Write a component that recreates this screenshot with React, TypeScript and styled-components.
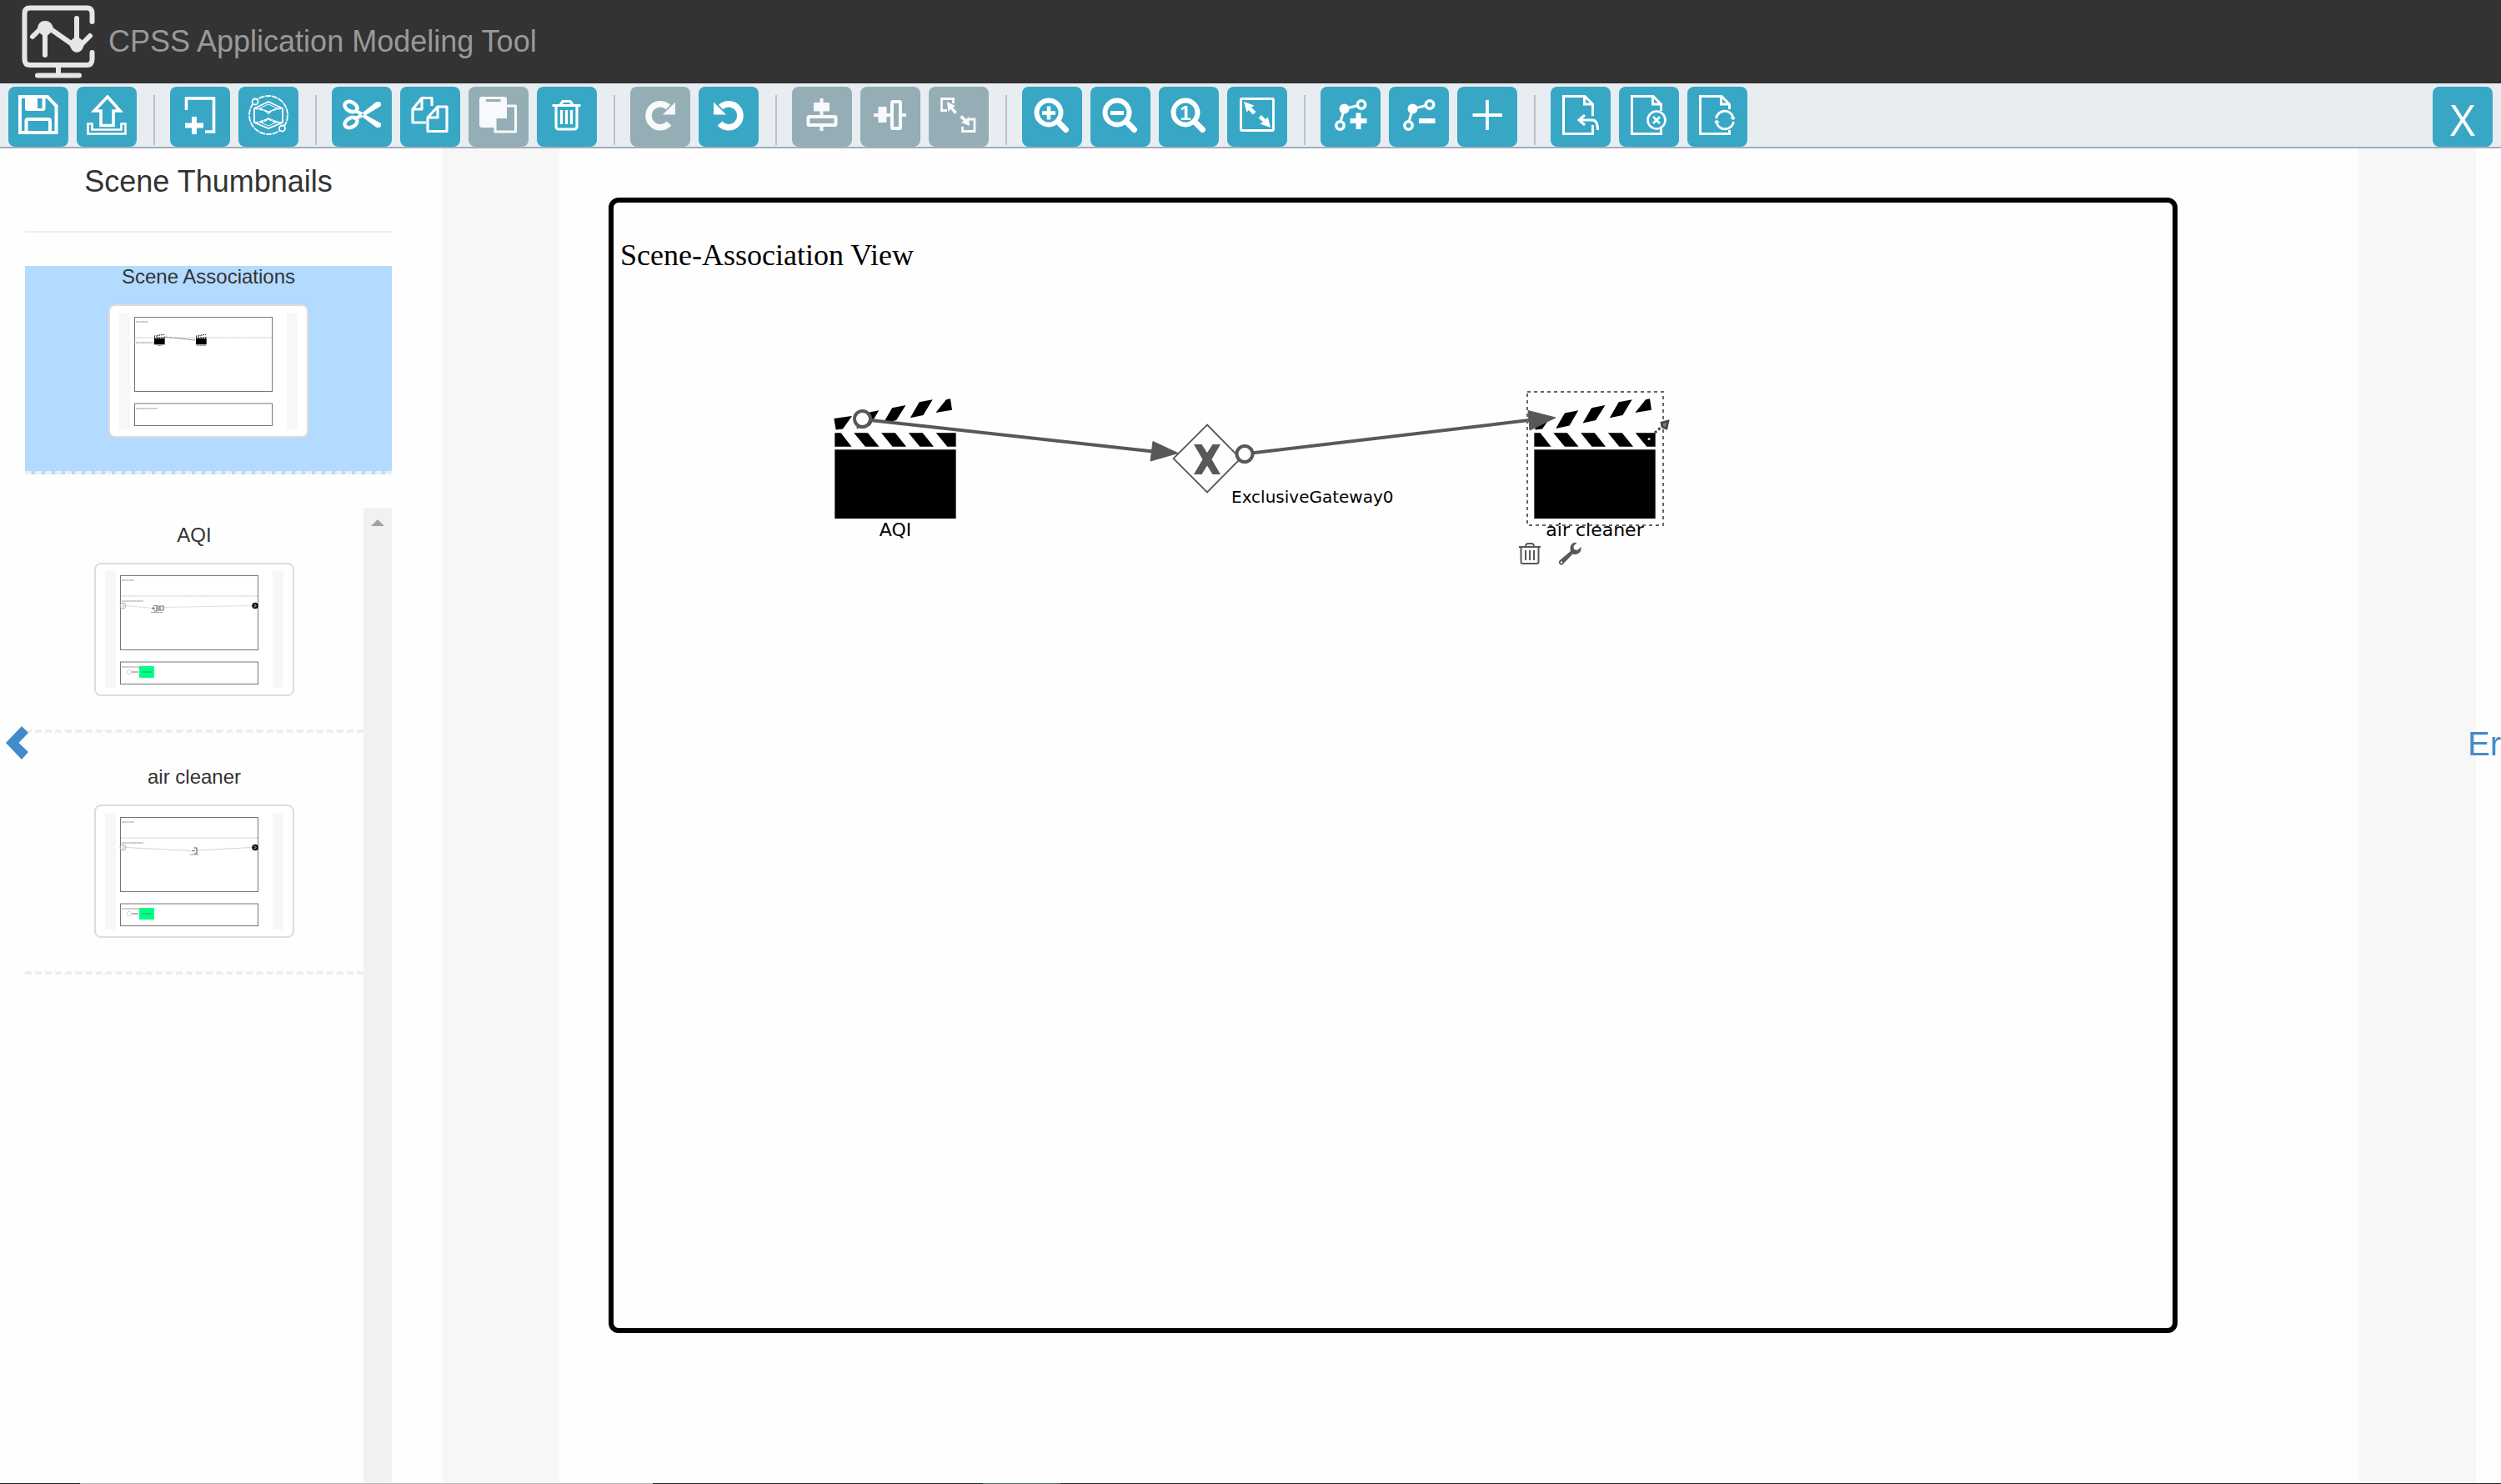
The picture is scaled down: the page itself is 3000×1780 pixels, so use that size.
import React from "react";
import styled, { createGlobalStyle } from "styled-components";

const GlobalStyle = createGlobalStyle`
  *, *::before, *::after { box-sizing: border-box; }
  body {
    margin: 0;
    background: #fefefe;
    color: #333;
    font-family: Arial, "Liberation Sans", sans-serif;
  }
  button { font: inherit; margin: 0; border: 0; padding: 0; background: none; cursor: pointer; }
`;

const Page = styled.div`
  position: relative;
  display: flex;
  flex-direction: column;
  height: 100vh;
  overflow: hidden;
`;

const Header = styled.header`
  display: flex;
  align-items: center;
  gap: 14px;
  height: 100px;
  flex: none;
  padding-left: 24px;
  background: #333;
  color: #999;
`;

const AppTitle = styled.h1`
  margin: 0;
  font-size: 36px;
  line-height: 40px;
  font-weight: 400;
`;

const Toolbar = styled.div`
  display: flex;
  align-items: flex-start;
  gap: 10px;
  flex: none;
  padding: 4px 10px 0;
  background: #e8edf1;
  border-bottom: 2px solid #a3acbd;
`;

const ToolButton = styled.button<{ $muted?: boolean }>`
  display: flex;
  justify-content: center;
  width: 72px;
  height: 72px;
  padding-top: 10px;
  border-radius: 8px;
  background: ${(p) => (p.$muted ? "#95aeb5" : "#38a7c6")};
  color: ${(p) => (p.$muted ? "#f7f9fb" : "#fff")};
`;

const CloseButton = styled(ToolButton)`
  margin-left: auto;
  padding: 0;
  font-family: "Open Sans", "Noto Sans", sans-serif;
  font-size: 52px;
  font-weight: 500;
  line-height: 78px;
`;

const Divider = styled.span`
  width: 2px;
  height: 60px;
  margin: 10px 8px 0 10px;
  background: #bac1cb;
`;

const Main = styled.main`
  display: flex;
  flex: 1;
  min-height: 0;
`;

const Sidebar = styled.aside`
  display: flex;
  flex-direction: column;
  flex: none;
  width: 530px;
  padding: 0 60px 0 30px;
`;

const SidebarTitle = styled.h2`
  margin: 0;
  padding: 20px 0 39px;
  border-bottom: 2px solid #eee;
  font-size: 36px;
  line-height: 40px;
  font-weight: 400;
  text-align: center;
`;

const SceneCard = styled.button<{ $selected?: boolean }>`
  display: flex;
  flex-direction: column;
  align-items: center;
  gap: 20px;
  flex: none;
  width: 100%;
  height: 250px;
  margin: ${(p) => (p.$selected ? "40px 0" : "20px 0")};
  border-bottom: 4px dashed #eee;
  background: ${(p) => (p.$selected ? "#b3daff" : "transparent")};
  color: #333;
  font-size: 24px;
  line-height: 26px;
`;

const ThumbFrame = styled.span`
  display: block;
  width: 240px;
  height: 160px;
  padding: 8px;
  border: 2px solid #ddd;
  border-radius: 8px;
  background: #fff;
`;

const SceneScroller = styled.div`
  display: flex;
  flex: 1;
  min-height: 0;
`;

const SceneList = styled.div`
  flex: 1;
  overflow: hidden;
  display: flex;
  flex-direction: column;
`;

const ScrollTrack = styled.div`
  display: flex;
  justify-content: center;
  width: 34px;
  padding-top: 14px;
  background: #f1f1f1;
`;

const Workspace = styled.section`
  display: flex;
  flex: 1;
  padding: 0 141px;
  background: #f7f7f7;
`;

const Sheet = styled.div`
  display: flex;
  flex: 1;
  padding: 59px 217px 180px 59px;
  background: #fefefe;
`;

const SceneBox = styled.div`
  position: relative;
  flex: 1;
  border: 6px solid #000;
  border-radius: 12px;
`;

const SceneTitle = styled.h3`
  margin: 41px 0 0 8px;
  color: #000;
  font: 400 36px/44px "Times New Roman", "Liberation Serif", serif;
`;

/* Free canvas on which the nodes of the diagram are placed. */
const DiagramLayer = styled.div`
  position: absolute;
  inset: -6px;
  color: #000;
  font-family: Verdana, "DejaVu Sans", sans-serif;
`;

const Edges = styled.svg`
  position: absolute;
  inset: 0;
  width: 100%;
  height: 100%;
  overflow: visible;
`;

const DiagramNode = styled.div<{ $x: number; $y: number }>`
  position: absolute;
  left: ${(p) => p.$x}px;
  top: ${(p) => p.$y}px;
  display: flex;
  flex-direction: column;
  align-items: center;
  font-size: 22px;
  line-height: 28px;
  white-space: nowrap;
`;

const GatewayLabel = styled.span`
  position: absolute;
  left: 71px;
  top: 76px;
  font-size: 20px;
  line-height: 24px;
`;

const NodeActions = styled.div`
  position: absolute;
  left: 1091px;
  top: 413px;
  display: flex;
  gap: 20px;
`;

const NodeAction = styled.button`
  display: flex;
  width: 28px;
  height: 28px;
  color: #585858;
`;

const RightGutter = styled.div`
  flex: none;
  width: 30px;
`;

const SideLink = styled.a<{ $side: "left" | "right" }>`
  position: absolute;
  top: 50%;
  ${(p) => (p.$side === "left" ? "left: 0;" : "right: 0;")}
  width: 40px;
  height: 48px;
  margin-top: -22px;
  overflow: hidden;
  color: #428bca;
  font-size: 40px;
  line-height: 48px;
  text-decoration: none;
  white-space: nowrap;
`;

const WindowEdge = styled.div`
  flex: none;
  height: 1px;
  background: linear-gradient(
    to right,
    #222 0 3.2%,
    #bbb 3.2% 26.1%,
    #222a2e 26.1% 39.3%,
    #566 39.3% 42.4%,
    #222a2e 42.4% 100%
  );
`;

/* ---------- icons, drawn on a 48 x 48 grid ---------- */

const icons: Record<string, React.ReactNode> = {
  save: (
    <>
      <path d="M2 2H35L45.5 13V45H2Z" strokeWidth="4" />
      <path d="M8 2h24.500v14a3 3 0 0 1-3 3H11a3 3 0 0 1-3-3ZM23 4v12h5.500V4Z" fill="currentColor" fillRule="evenodd" stroke="none" />
      <path d="M9.500 45V31a2 2 0 0 1 2-2H36a2 2 0 0 1 2 2V45" strokeWidth="4" />
    </>
  ),
  upload: (
    <>
      <path d="M25 2L40 19H32V36.500H17V19H9Z" strokeWidth="3.600" />
      <path d="M1.500 34.500H6.500V41.500H41.500V34.500H46.500V46.500H1.500Z" strokeWidth="2.600" />
    </>
  ),
  frame: (
    <>
      <path d="M7.500 18V4H40.500V44H30" strokeWidth="3.600" />
      <path d="M17 26V47M6 36.500H28" strokeWidth="6" />
    </>
  ),
  globe: (
    <g strokeWidth="1.800">
      <circle cx="24" cy="24" r="23" strokeDasharray="7 1" />
      <path d="M24 8L41 16V33L24 40L7 33V16Z" />
      <path d="M7 16Q20 17 24 22Q28 17 41 16M7 33Q20 33 24 28Q28 33 41 33" strokeDasharray="5 1" />
      <path d="M24 11L35 16L24 20L13 16ZM24 37L35 32L24 28L13 32Z" strokeWidth="1" />
      <circle cx="8" cy="8" r="3.500" fill="#38a7c6" />
      <circle cx="40.500" cy="40" r="3.500" fill="#38a7c6" />
    </g>
  ),
  cut: (
    <>
      <ellipse cx="11" cy="14" rx="8" ry="5.500" transform="rotate(28 11 14)" strokeWidth="4.500" />
      <ellipse cx="11" cy="33" rx="8" ry="5.500" transform="rotate(-28 11 33)" strokeWidth="4.500" />
      <path d="M17 17L25 21L41 8.500Q45 7 47 9.500V13L29 24L47 34V37.500Q45 40 41 38.500L25 26.500L17 30L16 26L21 23.500L16 21Z" fill="currentColor" stroke="none" />
      <circle cx="25" cy="23.500" r="1.200" fill="#38a7c6" stroke="none" />
    </>
  ),
  copy: (
    <g strokeWidth="3.200" strokeLinejoin="round">
      <path d="M19 33H3V17L14 3.500H26V13M14 4V17H3" />
      <path d="M33 14H44V43.500H21V27ZM33 14V27H21" />
    </g>
  ),
  paste: (
    <>
      <path d="M4 2H31a3 3 0 0 1 3 3V39H4a3 3 0 0 1-3-3V5a3 3 0 0 1 3-3Z" fill="currentColor" stroke="none" />
      <path d="M9 6.500H26.500" stroke="#95aeb5" strokeWidth="3" />
      <path d="M32 13H44.500V44H20V27Z" fill="#95aeb5" strokeWidth="3" strokeLinejoin="round" />
      <path d="M33 14V27H21L33 14Z" fill="currentColor" strokeWidth="2" />
    </>
  ),
  trash: (
    <g strokeWidth="3.200">
      <path d="M6.500 12.500H40.500M16 12L19 7.500H28L31 12" />
      <path d="M11 13V38a3 3 0 0 0 3 3H33a3 3 0 0 0 3-3V13M17.500 18V35M23.500 18V35M29.500 18V35" />
    </g>
  ),
  redo: (
    <>
      <path d="M33.500 14.500A14 14 0 1 0 34.500 34" strokeWidth="7.500" />
      <path d="M42 8.500V23.500H27Z" fill="currentColor" stroke="none" />
    </>
  ),
  undo: (
    <>
      <path d="M14.500 14.500A14 14 0 1 1 13.500 34" strokeWidth="7.500" />
      <path d="M6 8.500V23.500H21Z" fill="currentColor" stroke="none" />
    </>
  ),
  alignCenter: (
    <>
      <path d="M23.500 4V24M23.500 38V43" strokeWidth="4" />
      <rect x="14" y="9" width="19" height="10.500" rx="1" fill="currentColor" stroke="none" />
      <rect x="7.500" y="26" width="33" height="10" rx="1" strokeWidth="4" />
    </>
  ),
  alignMiddle: (
    <>
      <path d="M4 24H24M38 24H43" strokeWidth="4" />
      <rect x="9.500" y="14" width="10" height="19" rx="1" fill="currentColor" stroke="none" />
      <rect x="26" y="8" width="10" height="32" rx="1" strokeWidth="4" />
    </>
  ),
  sameSize: (
    <>
      <path d="M10 18.500H3.500V4.500H17.500V10M36 29H43V43.500H28.500V38" strokeWidth="2.800" />
      <path d="M10 8L20 13L17 15L22 20L19 23L14.500 17L11.500 20Z" fill="currentColor" stroke="none" />
      <path d="M37 37L27 33L30 31L25 27L28 24L33 29L36 26Z" fill="currentColor" stroke="none" />
    </>
  ),
  zoomIn: (
    <>
      <circle cx="20" cy="21" r="14.500" strokeWidth="6" />
      <path d="M31 32L40.500 41.500" strokeWidth="7" strokeLinecap="round" />
      <path d="M12 21.500H28M20 13.500V29.500" strokeWidth="4.500" />
    </>
  ),
  zoomOut: (
    <>
      <circle cx="20" cy="21" r="14.500" strokeWidth="6" />
      <path d="M31 32L40.500 41.500" strokeWidth="7" strokeLinecap="round" />
      <path d="M12 21.500H28" strokeWidth="5" />
    </>
  ),
  zoomActual: (
    <>
      <circle cx="20" cy="21" r="14.500" strokeWidth="6" />
      <path d="M31 32L40.500 41.500" strokeWidth="7" strokeLinecap="round" />
      <text x="20" y="30" textAnchor="middle" fontSize="24" fontWeight="700" fontFamily="Arial, Liberation Sans, sans-serif" fill="currentColor" stroke="none">1</text>
    </>
  ),
  fit: (
    <>
      <rect x="4.500" y="4.500" width="39" height="38" rx="1" strokeWidth="2.800" />
      <path d="M8 8L20.500 12.500L17 15L22.500 20L19 23.500L14 18L11.500 20.500Z" fill="currentColor" stroke="none" />
      <path d="M40 39L27.500 34.500L31 32L25.500 27.500L29 24L34 29L37 26.500Z" fill="currentColor" stroke="none" />
    </>
  ),
  addBend: (
    <>
      <path d="M33 12.500L16.500 16.500L12 32" strokeWidth="3" />
      <circle cx="37" cy="11.500" r="4.700" strokeWidth="3.600" />
      <circle cx="16.500" cy="16.500" r="6" fill="currentColor" stroke="none" />
      <circle cx="11.500" cy="36.500" r="4.700" strokeWidth="3.600" />
      <path d="M33.500 21.500V41M23.500 31H43.500" strokeWidth="6" />
    </>
  ),
  removeBend: (
    <>
      <path d="M33 12.500L16.500 16.500L12 32" strokeWidth="3" />
      <circle cx="37" cy="11.500" r="4.700" strokeWidth="3.600" />
      <circle cx="16.500" cy="16.500" r="6" fill="currentColor" stroke="none" />
      <circle cx="11.500" cy="36.500" r="4.700" strokeWidth="3.600" />
      <path d="M24 31H43.500" strokeWidth="6" />
    </>
  ),
  plus: <path d="M24 6V42M6.500 24H42" strokeWidth="3.800" />,
  docBack: (
    <>
      <path d="M38.500 25V11L29 1.500H3.500V46.500H38.500V36M28.500 1.500V11H38" strokeWidth="3" />
      <path d="M29 24L22 30L29 36M22 30H38Q44.500 30 44.500 42" strokeWidth="3" />
    </>
  ),
  docDelete: (
    <>
      <path d="M38.500 19V11L29 1.500H3.500V46.500H38.500V40M28.500 1.500V11H38" strokeWidth="3" />
      <circle cx="33" cy="30" r="10.500" strokeWidth="2.600" />
      <path d="M29 26L37 34M37 26L29 34" strokeWidth="2.600" />
    </>
  ),
  docRefresh: (
    <>
      <path d="M38.500 17V11L29 1.500H3.500V46.500H38.500V42M28.500 1.500V11H38" strokeWidth="3" />
      <path d="M22.500 28A10.500 10.500 0 0 1 43 27M43.500 32A10.500 10.500 0 0 1 23 33" strokeWidth="2.800" />
      <path d="M39 27H46L43 30ZM20 33L23 29.500L27 33Z" fill="currentColor" stroke="none" />
    </>
  ),
};

const Icon = ({ name, size = 48 }: { name: string; size?: number }) => (
  <svg width={size} height={size} viewBox="0 0 48 48" fill="none" stroke="currentColor" aria-hidden="true">
    {icons[name]}
  </svg>
);

const Logo = () => (
  <svg width="92" height="92" viewBox="24 4 92 92" fill="none" stroke="#e6e6e6" strokeWidth="6" strokeLinecap="round" aria-hidden="true">
    <path d="M110.500 26V16Q110.500 9.500 104 9.500H36Q29.500 9.500 29.500 16V71Q29.500 78 36 78H104Q110.500 78 110.500 71V63" />
    <path d="M70 80V90M45 90.500H95" />
    <path d="M54 33V66M39 44L49 34M58 33L88 54M92 22V54M96 55L108 43" />
    <path d="M45 34Q46 25 54 25Q62 25 64 34Q61 41 54 44Q47 41 45 34ZM83 52Q86 46 92 44Q98 46 101 52Q100 62 92 63Q85 62 83 52Z" fill="#e6e6e6" stroke="none" />
  </svg>
);

/* ---------- clapperboard ---------- */

const ClapperShapes = () => (
  <g fill="#000">
    <path d="M-3 75L62 66L29 113L4 116ZM78 111L110 56L159 46L127 101ZM175 92L207 37L256 27L222 81ZM272 73L305 16L353 7L319 63ZM364 54L402 7L417 4L423 44Z" />
    <path d="M0 127H22L61 177H0ZM69 127H119L160 177H110ZM168 127H218L258 177H208ZM266 127H317L357 177H307ZM365 127H437V177H406ZM0 187H437V436H0Z" />
  </g>
);

const Clapper = () => (
  <svg width="146" height="145" viewBox="0 0 437 436" overflow="visible" aria-hidden="true">
    <ClapperShapes />
  </svg>
);

/* ---------- scene thumbnails ---------- */

type SceneKind = "associations" | "aqi" | "cleaner";

const ThumbPicture = ({ kind }: { kind: SceneKind }) => (
  <svg width="220" height="140" viewBox="0 0 220 140" fill="none" aria-hidden="true">
    <path d="M3 0H16V140H3ZM204 0H217V140H204Z" fill="#f7f7f7" />
    <rect x="21.500" y="5.500" width="165" height="89" stroke="#757575" />
    <rect x="21.500" y="109" width="165" height="26.500" stroke="#757575" />
    <path d="M22 109H186" stroke="#bbb" strokeWidth="2" />
    <path d="M22 30H186" stroke="#bbb" strokeWidth="0.800" strokeDasharray="2 0.700" />
    <path d="M23 11H38M23 36H49M23 115H49" stroke="#aaa" strokeWidth="1.600" strokeDasharray="1.300 0.500" />
    {kind === "associations" ? (
      <>
        <path d="M57 29L94 33" stroke="#888" strokeDasharray="5 0.600" />
        <g transform="translate(45 25.500) scale(0.029)"><ClapperShapes /></g>
        <g transform="translate(95 25.500) scale(0.029)"><ClapperShapes /></g>
        <path d="M49 39.500H54M96 39.500H107" stroke="#888" strokeDasharray="1.300 0.500" />
      </>
    ) : (
      <>
        <circle cx="24.500" cy="41.500" r="3.500" stroke="#aaa" />
        <path d="M24 39.500L26 41.500L24 43.500" stroke="#999" />
        {kind === "aqi" ? (
          <>
            <path d="M28 41.500L59 44.500M74 43.500L179 41.500" stroke="#ccc" strokeWidth="0.800" strokeDasharray="2.500 0.600" />
            <path d="M59 44.500H63M61 42.500V46.500M61.500 41.500H65V48H61.500M67 42H73V47H67ZM69 42V47" stroke="#777" strokeWidth="1.200" />
            <path d="M58 49.500H72" stroke="#888" strokeDasharray="1.300 0.500" />
          </>
        ) : (
          <>
            <path d="M28 41.500L106 45.500M113 45L179 41.500" stroke="#bbb" strokeWidth="0.800" strokeDasharray="2.500 0.600" />
            <path d="M107 45.500H111M109.500 42H113V49H109.500" stroke="#666" strokeWidth="1.200" />
            <path d="M105 50H115" stroke="#888" strokeDasharray="1.300 0.500" />
          </>
        )}
        <circle cx="183" cy="41.500" r="3.800" fill="#111" />
        <path d="M182 39.500L184 41.500L182 43.500" stroke="#fff" strokeWidth="0.900" />
        <circle cx="32" cy="121" r="2.700" stroke="#ccc" fill="#fff" strokeWidth="0.800" />
        <path d="M35 121H43" stroke="#777" />
        <rect x="44" y="114" width="18" height="14" rx="1" fill="#00ff85" />
        <path d="M47 121H59" stroke="#1a8a55" strokeDasharray="1.300 0.500" />
      </>
    )}
  </svg>
);

const Scene = ({ name, kind, selected }: { name: string; kind: SceneKind; selected?: boolean }) => (
  <SceneCard type="button" $selected={selected}>
    <span>{name}</span>
    <ThumbFrame>
      <ThumbPicture kind={kind} />
    </ThumbFrame>
  </SceneCard>
);

/* ---------- page ---------- */

type Tool = { icon: string; label: string; muted?: boolean };

const toolGroups: Tool[][] = [
  [
    { icon: "save", label: "Save" },
    { icon: "upload", label: "Upload" },
  ],
  [
    { icon: "frame", label: "New scene" },
    { icon: "globe", label: "Resources" },
  ],
  [
    { icon: "cut", label: "Cut" },
    { icon: "copy", label: "Copy" },
    { icon: "paste", label: "Paste", muted: true },
    { icon: "trash", label: "Delete" },
  ],
  [
    { icon: "redo", label: "Redo", muted: true },
    { icon: "undo", label: "Undo" },
  ],
  [
    { icon: "alignCenter", label: "Align vertical", muted: true },
    { icon: "alignMiddle", label: "Align horizontal", muted: true },
    { icon: "sameSize", label: "Same size", muted: true },
  ],
  [
    { icon: "zoomIn", label: "Zoom in" },
    { icon: "zoomOut", label: "Zoom out" },
    { icon: "zoomActual", label: "Zoom to actual size" },
    { icon: "fit", label: "Zoom to fit" },
  ],
  [
    { icon: "addBend", label: "Add bend point" },
    { icon: "removeBend", label: "Remove bend point" },
    { icon: "plus", label: "Add" },
  ],
  [
    { icon: "docBack", label: "Import document" },
    { icon: "docDelete", label: "Delete document" },
    { icon: "docRefresh", label: "Refresh document" },
  ],
];

const Diagram = () => (
  <DiagramLayer>
    <DiagramNode $x={271} $y={240}>
      <Clapper />
      AQI
    </DiagramNode>
    <DiagramNode $x={1110} $y={240}>
      <Clapper />
      air cleaner
    </DiagramNode>
    <DiagramNode $x={676} $y={271}>
      <svg width="84" height="84" viewBox="0 0 84 84" aria-hidden="true">
        <path d="M42 1.500L82 42L42 82.500L1.500 42Z" fill="#fefefe" stroke="#585858" strokeWidth="1.800" />
        <path d="M26 25H35.500L42 35L48.500 25H58L47.500 43L58 61H48.500L42 50.500L35.500 61H26L36.500 43Z" fill="#585858" />
      </svg>
      <GatewayLabel>ExclusiveGateway0</GatewayLabel>
    </DiagramNode>
    <Edges aria-hidden="true">
      <g stroke="#585858" strokeWidth="4" fill="#fefefe">
        <path d="M305 266L653 304.500M763 307.500L1104 267" />
        <circle cx="304.500" cy="265.500" r="9.500" />
        <circle cx="763" cy="307.500" r="9.500" />
      </g>
      <path d="M683 306.500L653 292.500L650 316ZM1136 264L1103 255.500L1105 279Z" fill="#585858" stroke="#585858" />
      <rect x="1102" y="233" width="163" height="160" fill="none" stroke="#666" strokeWidth="2" strokeDasharray="4 4" />
      <circle cx="1248" cy="289.500" r="1.500" fill="#ddd" />
      <path d="M1255 282L1264 274" stroke="#444" strokeWidth="3" strokeDasharray="3 2.500" />
      <path d="M1263 270L1271 268L1269 277L1264 275Z" fill="#777" stroke="#444" strokeWidth="2.600" />
    </Edges>
    <NodeActions>
      <NodeAction type="button" aria-label="Delete node">
        <svg width="28" height="28" viewBox="0 0 28 28" fill="none" stroke="currentColor" strokeWidth="2" aria-hidden="true">
          <path d="M1 6H27M9 6Q9 2 12 2H16Q19 2 19 6M3.500 6V24Q3.500 26 5.500 26H22.500Q24.500 26 24.500 24V6M9 10V22M14 10V22M19 10V22" />
        </svg>
      </NodeAction>
      <NodeAction type="button" aria-label="Edit node">
        <svg width="28" height="28" viewBox="0 0 28 28" aria-hidden="true">
          <path d="M22.500 1Q17 0 15 5Q14 8 15 11L1.500 22.500Q0 25 2 27Q4.500 28.500 6.500 26L17.500 14.500Q22 16 25.500 13Q28 10.500 27.500 6L23 10L19 9L18.500 5Z" fill="currentColor" />
          <circle cx="4" cy="24.500" r="1.200" fill="#fff" />
        </svg>
      </NodeAction>
    </NodeActions>
  </DiagramLayer>
);

export default function App() {
  return (
    <>
      <GlobalStyle />
      <Page>
        <Header>
          <Logo />
          <AppTitle>CPSS Application Modeling Tool</AppTitle>
        </Header>
        <Toolbar role="toolbar" aria-label="Editor tools">
          {toolGroups.map((group, i) => (
            <React.Fragment key={i}>
              {i > 0 && <Divider />}
              {group.map((tool) => (
                <ToolButton key={tool.icon} type="button" aria-label={tool.label} $muted={tool.muted}>
                  <Icon name={tool.icon} />
                </ToolButton>
              ))}
            </React.Fragment>
          ))}
          <CloseButton type="button" aria-label="Close editor">X</CloseButton>
        </Toolbar>
        <Main>
          <Sidebar>
            <SidebarTitle>Scene Thumbnails</SidebarTitle>
            <Scene name="Scene Associations" kind="associations" selected />
            <SceneScroller>
              <SceneList>
                <Scene name="AQI" kind="aqi" />
                <Scene name="air cleaner" kind="cleaner" />
              </SceneList>
              <ScrollTrack>
                <svg width="16" height="8" viewBox="0 0 16 8" aria-hidden="true">
                  <path d="M8 0L16 8H0Z" fill="#a3a3a3" />
                </svg>
              </ScrollTrack>
            </SceneScroller>
          </Sidebar>
          <Workspace>
            <Sheet>
              <SceneBox>
                <SceneTitle>Scene-Association View</SceneTitle>
                <Diagram />
              </SceneBox>
            </Sheet>
          </Workspace>
          <RightGutter />
        </Main>
        <WindowEdge />
        <SideLink $side="left" href="#scenes" aria-label="Hide scene thumbnails">
          <svg width="40" height="46" viewBox="0 0 40 46" aria-hidden="true">
            <path d="M26 3L34 11L22.500 23L34 34L26 43L7 23Z" fill="currentColor" />
          </svg>
        </SideLink>
        <SideLink $side="right" href="#panel">Er</SideLink>
      </Page>
    </>
  );
}
